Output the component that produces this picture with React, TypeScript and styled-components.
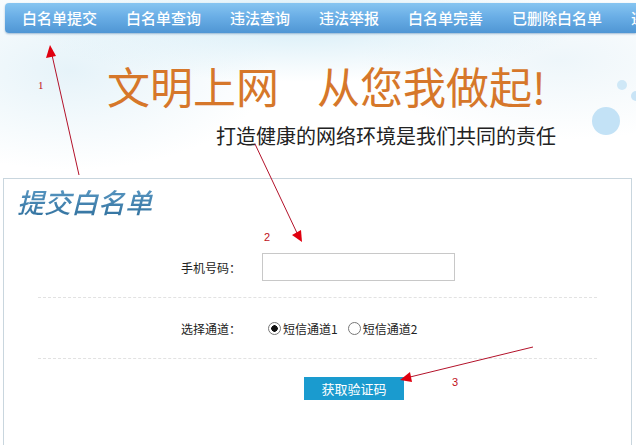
import styled, { createGlobalStyle } from "styled-components";

const GlobalStyle = createGlobalStyle`
  html, body {
    margin: 0;
    padding: 0;
    background: #ffffff;
  }
  body {
    font-family: "Noto Sans CJK SC", "Liberation Sans", sans-serif;
    color: #222;
  }
`;

const navItems = [
  "白名单提交",
  "白名单查询",
  "违法查询",
  "违法举报",
  "白名单完善",
  "已删除白名单",
  "违法白名单",
];

const App = () => {
  return (
    <Page>
      <GlobalStyle />
      <Header>
        <Nav>
          {navItems.map((item) => (
            <NavItem key={item}>{item}</NavItem>
          ))}
        </Nav>
        <Banner>
          <Slogan>
            <span>文明上网</span>
            <span>从您我做起!</span>
          </Slogan>
          <SubSlogan>打造健康的网络环境是我们共同的责任</SubSlogan>
          <Bubbles width="60" height="110" viewBox="0 0 60 110">
            <circle cx="30" cy="78" r="14" fill="#c3e2f6" />
            <circle cx="46" cy="42" r="5" fill="#cfe8f7" />
            <circle cx="60" cy="53" r="5" fill="#c9e4f6" />
          </Bubbles>
        </Banner>
      </Header>

      <Panel>
        <PanelTitle>提交白名单</PanelTitle>
        <Form>
          <Row>
            <Label>手机号码：</Label>
            <Input type="text" />
          </Row>
          <Row>
            <Label>选择通道：</Label>
            <Radio>
              <RadioDot checked />
              短信通道1
            </Radio>
            <Radio>
              <RadioDot />
              短信通道2
            </Radio>
          </Row>
          <ButtonRow>
            <Button type="button">获取验证码</Button>
          </ButtonRow>
        </Form>
      </Panel>

      <Annotations width="636" height="445" viewBox="0 0 636 445">
        <g stroke="#b3122a" strokeWidth="1" fill="none">
          <line x1="79" y1="175" x2="52" y2="55" />
          <line x1="255" y1="144" x2="297" y2="233" />
          <line x1="533" y1="347" x2="410" y2="377" />
        </g>
        <g fill="#e0000f">
          <polygon points="50,45 46,58 56,56" />
          <polygon points="302,242 292,235 301,230" />
          <polygon points="400,380 410,372 412,382" />
        </g>
        <g fill="#c0101a" fontSize="11" fontFamily="'Liberation Sans', sans-serif">
          <AnnoText x="38" y="89" fontFamily="'Liberation Serif', serif">1</AnnoText>
          <AnnoText x="264" y="241">2</AnnoText>
          <AnnoText x="452" y="386">3</AnnoText>
        </g>
      </Annotations>
    </Page>
  );
};

const Page = styled.div`
  position: relative;
  width: 636px;
  height: 445px;
  overflow: hidden;
  background: #ffffff;
`;

const Header = styled.div`
  padding-top: 3px;
  background:
    radial-gradient(ellipse 280px 60px at 300px 22px, #d6edf7 0%, rgba(214, 237, 247, 0) 100%),
    radial-gradient(ellipse 200px 100px at 70px 70px, #e6f3f9 0%, rgba(230, 243, 249, 0) 100%),
    radial-gradient(ellipse 200px 80px at 560px 60px, #eef6fa 0%, rgba(238, 246, 250, 0) 100%),
    #ffffff;
`;

const Nav = styled.nav`
  display: flex;
  align-items: center;
  gap: 29px;
  height: 30px;
  margin-left: 5px;
  padding-left: 17px;
  border-radius: 4px 0 0 4px;
  background: linear-gradient(#86c5f1 0%, #6aaee6 45%, #4f96d4 100%);
  box-shadow: 0 1px 2px rgba(60, 110, 160, 0.45);
  white-space: nowrap;
  overflow: hidden;
`;

const NavItem = styled.a`
  color: #ffffff;
  font-size: 15px;
  font-weight: 500;
  line-height: 30px;
  text-decoration: none;
  flex-shrink: 0;
`;

const Banner = styled.div`
  position: relative;
  height: 145px;
  display: flex;
  flex-direction: column;
  align-items: flex-start;
`;

const Slogan = styled.h1`
  display: flex;
  gap: 38px;
  margin: 25px 0 0 107px;
  font-size: 43px;
  font-weight: 400;
  line-height: 54px;
  color: #d6772a;
  white-space: nowrap;
`;

const SubSlogan = styled.p`
  margin: 11px 0 0 216px;
  font-size: 20px;
  line-height: 26px;
  color: #222;
  white-space: nowrap;
`;

const Bubbles = styled.svg`
  position: absolute;
  right: 0;
  top: 10px;
`;

const Panel = styled.section`
  margin: 0 4px 0 3px;
  height: 300px;
  border: 1px solid #c9d6de;
  border-bottom: none;
`;

const PanelTitle = styled.h2`
  margin: 5px 0 0 13px;
  font-size: 27px;
  font-weight: 500;
  font-style: italic;
  line-height: 36px;
  background: linear-gradient(#5d9bc6, #2f6f9c);
  -webkit-background-clip: text;
  background-clip: text;
  color: transparent;
`;

const Form = styled.div`
  margin: 17px 34px 0;
`;

const Row = styled.div`
  display: flex;
  align-items: center;
  height: 60px;
  padding-left: 143px;
  border-bottom: 1px dashed #e2e2e2;
  font-size: 12px;
`;

const Label = styled.span`
  width: 81px;
  color: #222;
`;

const Input = styled.input`
  box-sizing: border-box;
  width: 193px;
  height: 28px;
  border: 1px solid #c8c8c8;
  outline: none;
  padding: 0 6px;
`;

const Radio = styled.label`
  display: flex;
  align-items: center;
  gap: 2px;
  margin-left: 6px;
  margin-right: 4px;
  font-size: 12px;
  color: #222;
`;

const RadioDot = styled.span<{ checked?: boolean }>`
  box-sizing: border-box;
  width: 13px;
  height: 13px;
  border-radius: 50%;
  border: 1px solid #777;
  background: ${(props) =>
    props.checked
      ? "radial-gradient(circle, #111 0 3px, #fff 3.5px)"
      : "#fff"};
`;

const ButtonRow = styled.div`
  display: flex;
  padding-left: 266px;
  margin-top: 18px;
`;

const Button = styled.button`
  width: 100px;
  height: 23px;
  border: none;
  background: #1a9bcf;
  color: #ffffff;
  font-family: "Noto Sans CJK SC", sans-serif;
  font-size: 13px;
  padding: 0;
  cursor: pointer;
`;

const Annotations = styled.svg`
  position: absolute;
  left: 0;
  top: 0;
  pointer-events: none;
`;

const AnnoText = styled.text``;

export default App;
